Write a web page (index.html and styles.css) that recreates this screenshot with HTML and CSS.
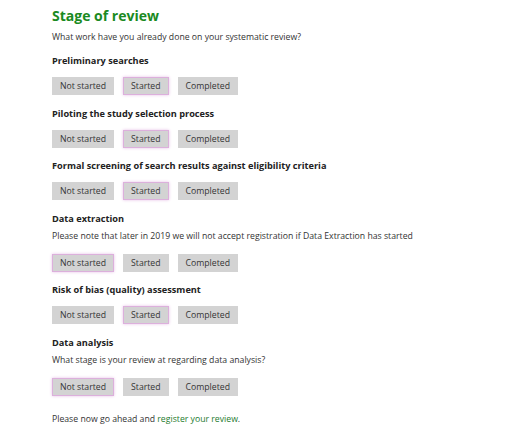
FILE: index.html
```html
<!DOCTYPE html>
<html lang="en">
<head>
<meta charset="utf-8">
<title>Stage of review</title>
<link rel="stylesheet" href="styles.css">
</head>
<body>
<main class="page">
  <h1 class="title">Stage of review</h1>
  <p class="intro">What work have you already done on your systematic review?</p>

  <section class="stage">
    <h2 class="stage-heading">Preliminary searches</h2>
    <div class="options">
      <button class="opt">Not started</button>
      <button class="opt selected">Started</button>
      <button class="opt">Completed</button>
    </div>
  </section>

  <section class="stage">
    <h2 class="stage-heading">Piloting the study selection process</h2>
    <div class="options">
      <button class="opt">Not started</button>
      <button class="opt selected">Started</button>
      <button class="opt">Completed</button>
    </div>
  </section>

  <section class="stage">
    <h2 class="stage-heading">Formal screening of search results against eligibility criteria</h2>
    <div class="options">
      <button class="opt">Not started</button>
      <button class="opt selected">Started</button>
      <button class="opt">Completed</button>
    </div>
  </section>

  <section class="stage">
    <h2 class="stage-heading">Data extraction</h2>
    <p class="note">Please note that later in 2019 we will not accept registration if Data Extraction has started</p>
    <div class="options">
      <button class="opt selected">Not started</button>
      <button class="opt">Started</button>
      <button class="opt">Completed</button>
    </div>
  </section>

  <section class="stage">
    <h2 class="stage-heading">Risk of bias (quality) assessment</h2>
    <div class="options">
      <button class="opt">Not started</button>
      <button class="opt selected">Started</button>
      <button class="opt">Completed</button>
    </div>
  </section>

  <section class="stage">
    <h2 class="stage-heading">Data analysis</h2>
    <p class="note">What stage is your review at regarding data analysis?</p>
    <div class="options">
      <button class="opt selected">Not started</button>
      <button class="opt">Started</button>
      <button class="opt">Completed</button>
    </div>
  </section>

  <p class="closing">Please now go ahead and <a class="link" href="#">register your review</a>.</p>
</main>
</body>
</html>
```

FILE: styles.css
```css
html, body {
  margin: 0;
  padding: 0;
  background: #ffffff;
}

body {
  font-family: "Open Sans", "Noto Sans", "Liberation Sans", sans-serif;
  color: #333333;
  font-size: 8.7px;
}

.page {
  padding: 7px 0 0 52px;
  display: flex;
  flex-direction: column;
}

.title {
  margin: 0;
  font-size: 14px;
  line-height: 18px;
  font-weight: 700;
  color: #1a8a22;
}

.intro {
  margin: 5px 0 0;
  line-height: 14px;
}

.stage {
  margin-top: 10px;
  display: flex;
  flex-direction: column;
}

.stage + .stage {
  margin-top: 11.6px;
}

.stage-heading {
  margin: 0;
  font-size: 9.2px;
  line-height: 14px;
  font-weight: 700;
  color: #222222;
}

.note {
  margin: 3px 0 2px;
  line-height: 14px;
}

.options {
  margin-top: 9px;
  display: flex;
  gap: 9px;
}

.opt {
  font-family: inherit;
  font-size: 8.7px;
  color: #333333;
  height: 18px;
  padding: 0 7px;
  background: #d3d3d3;
  border: 1px solid #d3d3d3;
  border-radius: 0;
  line-height: 16px;
}

.opt.selected {
  border-color: #dcb0dc;
  box-shadow: 0 0 3px #e6c0e6;
}

.closing {
  margin: 16px 0 0;
  line-height: 14px;
}

.link {
  color: #1d7a2e;
  text-decoration: none;
}
```
